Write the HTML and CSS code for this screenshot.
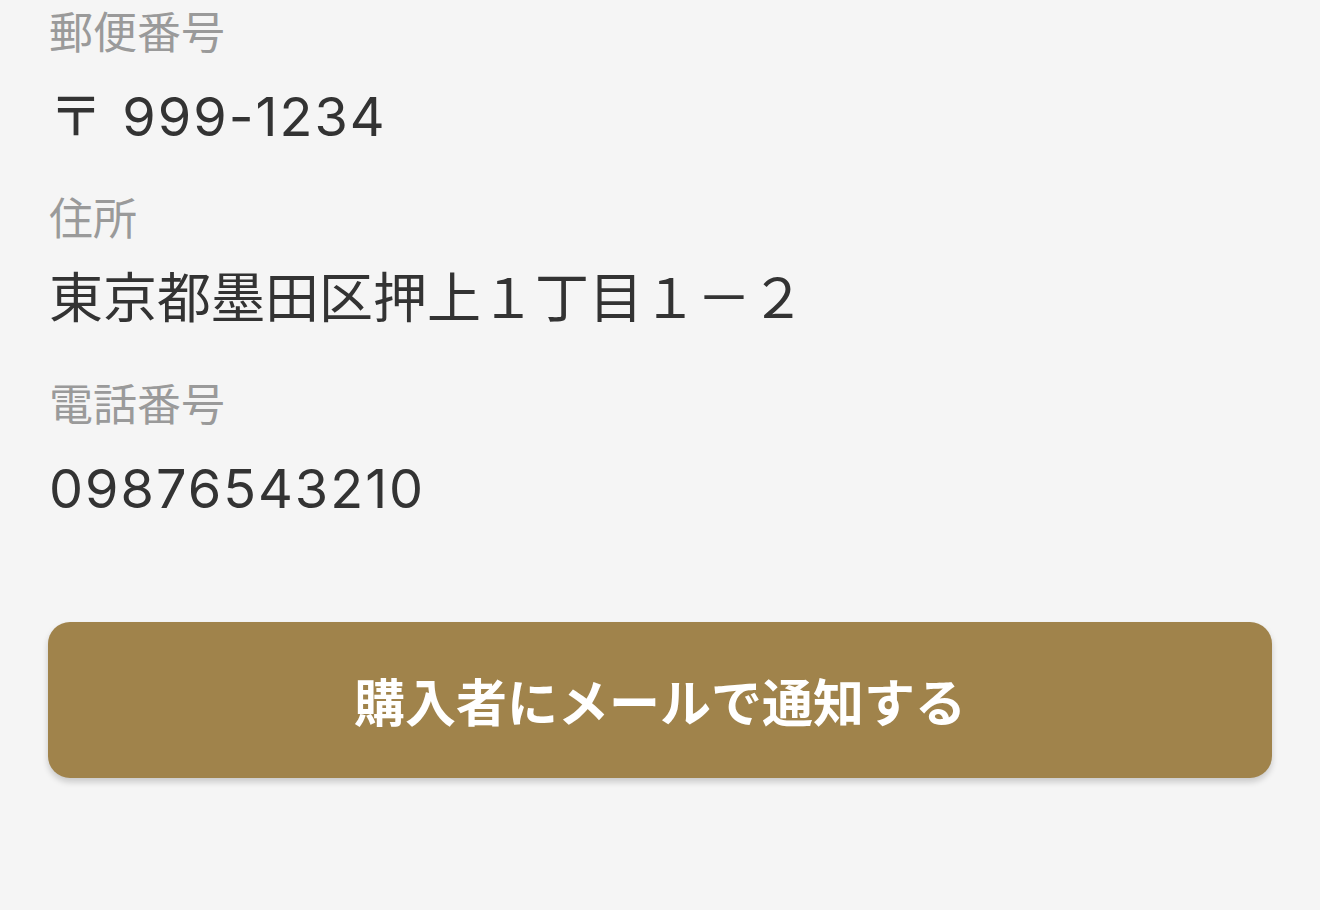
FILE: index.html
```html
<!DOCTYPE html>
<html lang="ja">
<head>
<meta charset="utf-8">
<link rel="stylesheet" href="styles.css">
</head>
<body>
<main class="page">
  <dl class="info">
    <div class="field">
      <dt class="label">郵便番号</dt>
      <dd class="value num">〒 999-1234</dd>
    </div>
    <div class="field">
      <dt class="label">住所</dt>
      <dd class="value">東京都墨田区押上１丁目１－２</dd>
    </div>
    <div class="field">
      <dt class="label">電話番号</dt>
      <dd class="value num">09876543210</dd>
    </div>
  </dl>
  <button class="notify" type="button">購入者にメールで通知する</button>
</main>
</body>
</html>
```

FILE: styles.css
```css
html, body {
  margin: 0;
  padding: 0;
  background: #f5f5f5;
}
body {
  font-family: "Noto Sans CJK JP", "Noto Sans", sans-serif;
  width: 1320px;
  height: 910px;
  overflow: hidden;
}
.page {
  padding: 0 48px;
  margin-top: -2px;
}
.info {
  margin: 0;
  display: flex;
  flex-direction: column;
  gap: 36px;
}
.field {
  display: flex;
  flex-direction: column;
  gap: 16px;
}
.label {
  margin: 0;
  font-size: 44px;
  line-height: 64px;
  color: #9a9a9a;
  padding-left: 1px;
}
.value {
  margin: 0;
  font-family: "Inter", "Noto Sans CJK JP", sans-serif;
  font-size: 54px;
  line-height: 70px;
  color: #333333;
  padding-left: 1px;
}
.value.num {
  letter-spacing: 2px;
  padding-top: 4px;
  margin-bottom: -4px;
}
.notify {
  display: flex;
  align-items: center;
  justify-content: center;
  width: 100%;
  height: 156px;
  margin-top: 102px;
  border: none;
  border-radius: 22px;
  background: #a0834b;
  color: #ffffff;
  font-family: "Noto Sans CJK JP", sans-serif;
  font-size: 51px;
  font-weight: 700;
  box-shadow: 0 4px 6px rgba(0,0,0,0.18);
  padding: 0;
}
```
